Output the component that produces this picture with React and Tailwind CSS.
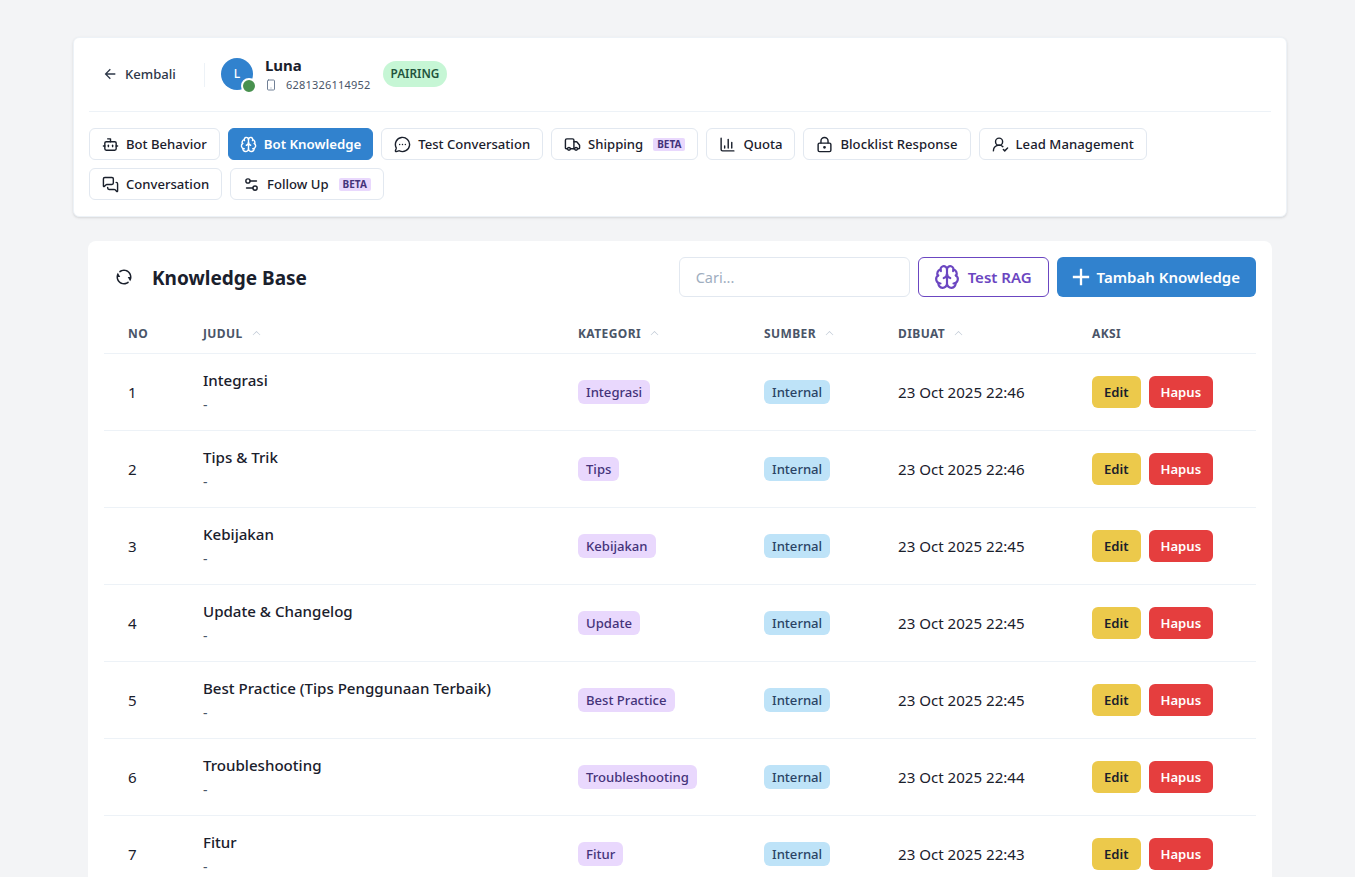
import React from "react";
import { Smartphone, Bot, Brain, MessageCircleMore, Truck, ChartColumn, LockKeyhole, UserRoundCheck, MessagesSquare, Settings2 } from "lucide-react";
import { RiArrowLeftLine, RiRefreshLine, RiAddLine } from "react-icons/ri";
import { PiCaretUp } from "react-icons/pi";

const font = "font-['Noto_Sans','Open_Sans',sans-serif]";

function Beta() {
  return <span className="ml-[3px] rounded-[2px] bg-[#E9D8FD] px-1 text-[10px] font-bold leading-[13px] text-[#44337A]">BETA</span>;
}

function Tab({ icon: Icon, label, beta, active, wide }) {
  return (
    <button className={`flex h-8 items-center gap-[7px] rounded-md border ${active ? "border-[#3182CE] bg-[#3182CE] pl-[11px] pr-[11px] text-[13.25px] font-semibold text-white" : "border-[#E2E8F0] bg-white px-3 text-[13.1px] font-medium text-[#1A202C]"} ${wide ? "tracking-[0.06px]" : ""}`}>
      <Icon size={17} />
      <span className="pt-px">{label}</span>
      {beta && <Beta />}
    </button>
  );
}

const rows = [
  ["1", "Integrasi", "Integrasi", "23 Oct 2025 22:46"],
  ["2", "Tips & Trik", "Tips", "23 Oct 2025 22:46"],
  ["3", "Kebijakan", "Kebijakan", "23 Oct 2025 22:45"],
  ["4", "Update & Changelog", "Update", "23 Oct 2025 22:45"],
  ["5", "Best Practice (Tips Penggunaan Terbaik)", "Best Practice", "23 Oct 2025 22:45"],
  ["6", "Troubleshooting", "Troubleshooting", "23 Oct 2025 22:44"],
  ["7", "Fitur", "Fitur", "23 Oct 2025 22:43"],
];

function Head({ children, sort }) {
  return (
    <th className="h-[38px] border-b border-[#EDF2F7] px-6 text-left text-xs font-bold tracking-[0.4px] text-[#4A5568]">
      <span className="flex items-center gap-2">
        {children}
        {sort && <PiCaretUp size={11} className="text-[#BCC6D3]" />}
      </span>
    </th>
  );
}

export default function App() {
  return (
    <div className={`${font} h-[877px] overflow-hidden bg-[#F3F4F6] text-[#1A202C]`}>
      <div className="pl-[73px] pr-[68px] pt-[37px]">
        <div className="rounded-md border border-[#EDF2F7] bg-white px-[15px] pb-4 shadow-sm">
          <div className="flex h-[74px] items-center border-b border-[#EDF2F7]">
            <button className="flex items-center gap-[7px] px-[13px] text-[13.1px] font-medium text-[#2D3748]">
              <RiArrowLeftLine size={16} />
              Kembali
            </button>
            <div className="ml-[15px] mr-4 h-6 w-px bg-[#EDF2F7]" />
            <div className="relative -mt-[2px] flex h-8 w-8 items-center justify-center rounded-full bg-[#3182CE] text-xs font-medium text-white">
              L
              <span className="absolute -bottom-1 -right-1 h-4 w-4 rounded-full border-2 border-white bg-[#48914F]" />
            </div>
            <div className="-mt-[2px] ml-3 flex flex-col">
              <span className="text-[15px] font-bold leading-5 text-[#1A202C]">Luna</span>
              <span className="mt-[2px] flex items-center gap-[9px] text-[11px] leading-4 tracking-[0.22px] text-[#4A5568]">
                <Smartphone size={12} className="text-[#718096]" />
                6281326114952
              </span>
            </div>
            <span className="-mt-[2px] ml-3 flex h-[26px] items-center rounded-full bg-[#C6F6D5] px-2 text-[11.8px] font-semibold text-[#22543D]">PAIRING</span>
          </div>
          <div className="flex flex-wrap gap-2 pt-4">
            <Tab icon={Bot} label="Bot Behavior" />
            <Tab icon={Brain} label="Bot Knowledge" active />
            <Tab icon={MessageCircleMore} label="Test Conversation" />
            <Tab icon={Truck} label="Shipping" beta />
            <Tab icon={ChartColumn} label="Quota" />
            <Tab icon={LockKeyhole} label="Blocklist Response" wide />
            <Tab icon={UserRoundCheck} label="Lead Management" wide />
            <Tab icon={MessagesSquare} label="Conversation" />
            <Tab icon={Settings2} label="Follow Up" beta />
          </div>
        </div>
      </div>

      <div className="ml-[88px] mr-[83px] mt-6 rounded-lg bg-white px-4 pt-4">
        <div className="flex h-10 items-center">
          <RiRefreshLine size={18} className="ml-[11px] text-[#1A202C]" />
          <h2 className="ml-[19px] pt-[3px] text-[19px] font-bold text-[#1A202C]">Knowledge Base</h2>
          <div className="ml-auto flex items-center gap-2">
            <input placeholder="Cari..." className="h-10 w-[231px] rounded-md border border-[#E2E8F0] bg-white px-4 text-[14.5px] outline-none placeholder:text-[#A0AEC0]" />
            <button className="flex h-10 items-center gap-2 rounded-md border border-[#6B46C1] pl-[15px] pr-4 text-[15px] font-semibold text-[#6B46C1]">
              <Brain size={26} />
              Test RAG
            </button>
            <button className="flex h-10 items-center gap-[2px] rounded-md bg-[#3182CE] pl-[10px] pr-4 text-[15px] font-semibold text-white">
              <RiAddLine size={28} />
              Tambah Knowledge
            </button>
          </div>
        </div>
        <table className="mt-[18px] w-full table-fixed border-collapse">
          <colgroup>
            <col className="w-[75px]" />
            <col className="w-[375px]" />
            <col className="w-[186px]" />
            <col className="w-[134px]" />
            <col className="w-[194px]" />
            <col />
          </colgroup>
          <thead>
            <tr>
              <Head>NO</Head>
              <Head sort>JUDUL</Head>
              <Head sort>KATEGORI</Head>
              <Head sort>SUMBER</Head>
              <Head sort>DIBUAT</Head>
              <Head>AKSI</Head>
            </tr>
          </thead>
          <tbody>
            {rows.map(([no, title, cat, date]) => (
              <tr key={no} className="h-[77px] border-b border-[#EDF2F7] text-[15.1px] text-[#1A202C]">
                <td className="px-6 pt-[2px]">{no}</td>
                <td className="px-6">
                  <div className="font-medium leading-[22px]">{title}</div>
                  <div className="mt-1 text-sm leading-5 text-[#4A5568]">-</div>
                </td>
                <td className="px-6">
                  <span className="inline-block rounded-md bg-[#E9D8FD] px-2 text-[13.1px] font-medium leading-6 text-[#44337A]">{cat}</span>
                </td>
                <td className="px-6">
                  <span className="inline-block rounded-md bg-[#BEE3F8] px-2 text-[13.1px] font-medium leading-6 text-[#2A4365]">Internal</span>
                </td>
                <td className="whitespace-nowrap px-6 pt-[2px]">{date}</td>
                <td className="px-6">
                  <div className="flex gap-2">
                    <button className="h-8 rounded-md bg-[#ECC94B] px-3 pt-[2px] text-[13.1px] font-semibold text-[#1A202C]">Edit</button>
                    <button className="h-8 rounded-md bg-[#E53E3E] px-3 pt-[2px] text-[13.1px] font-semibold text-white">Hapus</button>
                  </div>
                </td>
              </tr>
            ))}
          </tbody>
        </table>
      </div>
    </div>
  );
}
